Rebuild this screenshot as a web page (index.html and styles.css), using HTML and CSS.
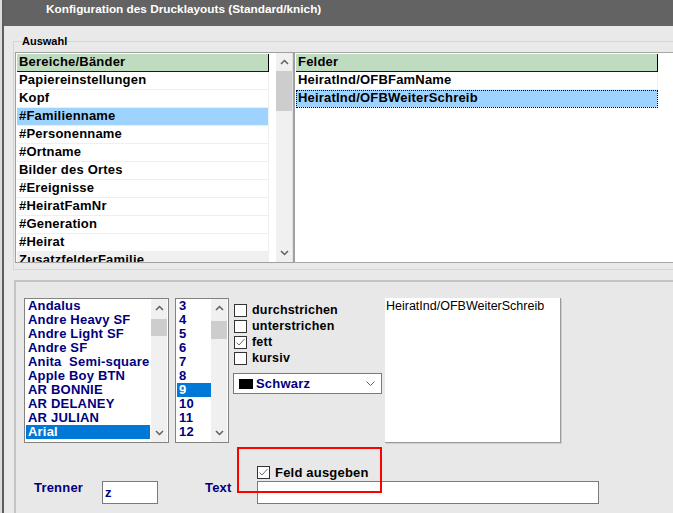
FILE: index.html
```html
<!DOCTYPE html>
<html lang="de">
<head>
<meta charset="utf-8">
<title>Konfiguration des Drucklayouts</title>
<link rel="stylesheet" href="styles.css">
</head>
<body>
<div class="window">
  <div class="titlebar">Konfiguration des Drucklayouts (Standard/knich)</div>
  <div class="client">
    <fieldset class="group">
      <legend>Auswahl</legend>
      <div class="lists">
        <div class="lb lb-bands">
          <div class="grid">
            <div class="hdr">Bereiche/Bänder</div>
            <div class="row">Papiereinstellungen</div>
            <div class="row">Kopf</div>
            <div class="row sel">#Familienname</div>
            <div class="row">#Personenname</div>
            <div class="row">#Ortname</div>
            <div class="row">Bilder des Ortes</div>
            <div class="row">#Ereignisse</div>
            <div class="row">#HeiratFamNr</div>
            <div class="row">#Generation</div>
            <div class="row">#Heirat</div>
            <div class="row dim">ZusatzfelderFamilie</div>
          </div>
          <div class="vscroll">
            <span class="arr"><svg width="9" height="6" viewBox="0 0 9 6"><polyline points="1,5 4.5,1.5 8,5" fill="none" stroke="#606060" stroke-width="1.5"/></svg></span>
            <span class="thumb t-bands"></span>
            <span class="arr down"><svg width="9" height="6" viewBox="0 0 9 6"><polyline points="1,1 4.5,4.5 8,1" fill="none" stroke="#606060" stroke-width="1.5"/></svg></span>
          </div>
        </div>
        <div class="lb lb-fields">
          <div class="grid">
            <div class="hdr">Felder</div>
            <div class="row">HeiratInd/OFBFamName</div>
            <div class="row sel focus">HeiratInd/OFBWeiterSchreib</div>
          </div>
        </div>
      </div>
    </fieldset>

    <div class="panel">
      <div class="format">
        <div class="lbx fonts">
          <ul class="items">
            <li>Andalus</li>
            <li>Andre Heavy SF</li>
            <li>Andre Light SF</li>
            <li>Andre SF</li>
            <li>Anita  Semi-square</li>
            <li>Apple Boy BTN</li>
            <li>AR BONNIE</li>
            <li>AR DELANEY</li>
            <li>AR JULIAN</li>
            <li class="sel">Arial</li>
          </ul>
          <div class="vscroll">
            <span class="arr"><svg width="9" height="6" viewBox="0 0 9 6"><polyline points="1,5 4.5,1.5 8,5" fill="none" stroke="#606060" stroke-width="1.5"/></svg></span>
            <span class="thumb t-fonts"></span>
            <span class="arr down"><svg width="9" height="6" viewBox="0 0 9 6"><polyline points="1,1 4.5,4.5 8,1" fill="none" stroke="#606060" stroke-width="1.5"/></svg></span>
          </div>
        </div>
        <div class="lbx sizes">
          <ul class="items">
            <li>3</li>
            <li>4</li>
            <li>5</li>
            <li>6</li>
            <li>7</li>
            <li>8</li>
            <li class="sel">9</li>
            <li>10</li>
            <li>11</li>
            <li>12</li>
          </ul>
          <div class="vscroll">
            <span class="arr"><svg width="9" height="6" viewBox="0 0 9 6"><polyline points="1,5 4.5,1.5 8,5" fill="none" stroke="#606060" stroke-width="1.5"/></svg></span>
            <span class="thumb t-sizes"></span>
            <span class="arr down"><svg width="9" height="6" viewBox="0 0 9 6"><polyline points="1,1 4.5,4.5 8,1" fill="none" stroke="#606060" stroke-width="1.5"/></svg></span>
          </div>
        </div>
        <div class="styles">
          <label class="chk"><span class="box"></span>durchstrichen</label>
          <label class="chk"><span class="box"></span>unterstrichen</label>
          <label class="chk"><span class="box"><svg width="11" height="11" viewBox="0 0 11 11"><polyline points="1.5,5.5 4,8 9.5,2" fill="none" stroke="#6d6d6d" stroke-width="1"/></svg></span>fett</label>
          <label class="chk"><span class="box"></span>kursiv</label>
          <div class="combo">
            <span class="swatch"></span>
            <span class="val">Schwarz</span>
            <svg class="chev" width="9" height="5" viewBox="0 0 9 5"><polyline points="0.5,0.5 4.5,4.5 8.5,0.5" fill="none" stroke="#606060" stroke-width="1"/></svg>
          </div>
        </div>
        <div class="preview">HeiratInd/OFBWeiterSchreib</div>
      </div>

      <div class="output">
        <label class="chk"><span class="box"><svg width="11" height="11" viewBox="0 0 11 11"><polyline points="1.5,5.5 4,8 9.5,2" fill="none" stroke="#6d6d6d" stroke-width="1"/></svg></span>Feld ausgeben</label>
      </div>

      <div class="fieldrow">
        <span class="flabel trenner">Trenner</span>
        <div class="input short">z</div>
        <span class="flabel text">Text</span>
        <div class="input long"></div>
      </div>

      <div class="highlight"></div>
    </div>
  </div>
</div>
</body>
</html>
```
FILE: styles.css
```css
html, body {
  margin: 0;
  padding: 0;
}
body {
  background: #dcdcdc;
  font-family: "Liberation Sans", Arial, sans-serif;
  font-size: 12px;
  height: 513px;
  overflow: hidden;
  color: #000;
}
.window {
  margin-left: 2px;
  border-left: 2px solid #5e5e5e;
  height: 513px;
  display: flex;
  flex-direction: column;
  overflow: hidden;
}
.titlebar {
  height: 26px;
  box-sizing: border-box;
  background: #636363;
  color: #fff;
  font-weight: bold;
  font-size: 11.8px;
  line-height: 14px;
  padding: 2px 0 0 42px;
  white-space: nowrap;
  flex: none;
}
.client {
  flex: 1;
  background: #e9e9e9;
  padding-top: 8px;
  display: flex;
  flex-direction: column;
  min-height: 0;
}

/* Auswahl group */
.group {
  margin: 0 0 0 9px;
  padding: 4px 0 6px 1px;
  border: 1px solid #d5d5d5;
  border-right: 0;
  min-width: 0;
  flex: none;
}
.group legend {
  margin-left: 7px;
  padding: 0;
  font-weight: bold;
  font-size: 11px;
  line-height: 14px;
}
.lists {
  display: flex;
  height: 211px;
}
.lb {
  box-sizing: border-box;
  height: 211px;
  background: #fff;
  display: flex;
}
.lb-bands {
  width: 278px;
  flex: none;
  border: 1px solid #a0a0a0;
  border-right: 0;
}
.lb-fields {
  flex: 1;
  border-top: 1px solid #a9a9a9;
  border-bottom: 1px solid #a9a9a9;
  border-left: 2px solid #a0a0a0;
  padding-left: 1px;
}
.grid {
  margin-top: 1px;
  overflow: hidden;
  font-weight: bold;
  font-size: 13px;
  letter-spacing: 0.2px;
  white-space: nowrap;
}
.lb-bands .grid {
  width: 252px;
  height: 208px;
  margin-left: 1px;
}
.lb-fields .grid {
  width: 362px;
}
.hdr {
  height: 17px;
  line-height: 16px;
  background: #c0dcc0;
  border-bottom: 1px solid #1a1a1a;
  border-right: 1px solid #000;
  padding-left: 2px;
}
.row {
  height: 17px;
  line-height: 16px;
  border-bottom: 1px solid #efefef;
  border-right: 1px solid #efefef;
  padding-left: 2px;
}
.row.sel {
  background: #9fd3ff;
}
.row.focus {
  outline: 1px dotted #000;
  outline-offset: -1px;
}
.row.dim {
  background: #f0f0f0;
}

/* scrollbars */
.vscroll {
  width: 16px;
  flex: none;
  background: #f0f0f0;
  display: flex;
  flex-direction: column;
}
.lb-bands .vscroll {
  margin-left: 7px;
  border-right: 1px solid #e2e2e2;
}
.fonts .vscroll {
  margin-left: 1px;
}
.arr {
  height: 18px;
  width: 16px;
  flex: none;
  display: flex;
  align-items: center;
  justify-content: center;
}
.arr.down {
  margin-top: auto;
}
.thumb {
  width: 16px;
  flex: none;
  background: #cdcdcd;
}
.t-bands {
  height: 40px;
}
.t-fonts {
  margin-top: 2px;
  height: 17px;
}
.t-sizes {
  margin-top: 4px;
  height: 18px;
}

/* bottom panel */
.panel {
  position: relative;
  flex: 1;
  margin: 10px 0 0 10px;
  border-top: 2px solid #c4c4c4;
  border-left: 2px solid #c4c4c4;
  background: #e8e8e8;
}
.format {
  display: flex;
  align-items: flex-start;
  padding: 16px 0 0 8px;
}
.lbx {
  box-sizing: border-box;
  height: 145px;
  border: 1px solid #828282;
  background: #fff;
  display: flex;
  padding-left: 1px;
  flex: none;
}
.fonts {
  width: 145px;
}
.sizes {
  width: 54px;
  margin-left: 6px;
}
.items {
  margin: 0;
  padding: 0;
  list-style: none;
  color: #000080;
  font-weight: bold;
  font-size: 13px;
  letter-spacing: 0.2px;
  flex: none;
  overflow: hidden;
}
.fonts .items {
  width: 124px;
}
.sizes .items {
  width: 34px;
}
.items li {
  height: 14px;
  line-height: 14px;
  padding-left: 2px;
  white-space: pre;
}
.items li.sel {
  background: #0078d7;
  color: #fff;
}
.styles {
  margin-left: 4px;
  padding-top: 4px;
  display: flex;
  flex-direction: column;
  flex: none;
}
.chk {
  display: flex;
  align-items: center;
  height: 16px;
  font-weight: bold;
  font-size: 12.5px;
  letter-spacing: 0.2px;
  color: #000;
  white-space: nowrap;
}
.styles .chk {
  margin-left: 1px;
}
.output .chk {
  font-size: 13px;
}
.box {
  width: 13px;
  height: 13px;
  box-sizing: border-box;
  border: 1px solid #333;
  background: #fff;
  margin-right: 5px;
  display: flex;
  align-items: center;
  justify-content: center;
  flex: none;
}
.combo {
  margin-top: 7px;
  width: 149px;
  height: 21px;
  box-sizing: border-box;
  border: 1px solid #7a7a7a;
  background: #fff;
  display: flex;
  align-items: center;
  padding-left: 5px;
  color: #000080;
  font-weight: bold;
  font-size: 13px;
  letter-spacing: 0.2px;
}
.swatch {
  width: 14px;
  height: 10px;
  background: #000;
  margin-right: 3px;
  flex: none;
}
.chev {
  margin-left: auto;
  margin-right: 6px;
}
.preview {
  margin-left: 3px;
  width: 176px;
  height: 145px;
  box-sizing: border-box;
  background: #fff;
  border-right: 1px solid #9a9a9a;
  border-bottom: 1px solid #9a9a9a;
  box-shadow: 1px 1px 0 #cfcfcf;
  padding: 1px 0 0 1px;
  font-size: 12.5px;
  line-height: 15px;
  white-space: nowrap;
  flex: none;
}
.output {
  margin-top: 21px;
  padding-left: 241px;
}
.fieldrow {
  display: flex;
  align-items: flex-start;
  margin-top: 1px;
  padding-left: 18px;
}
.flabel {
  color: #000080;
  font-weight: bold;
  font-size: 13px;
  letter-spacing: 0.2px;
  line-height: 14px;
  flex: none;
}
.flabel.trenner {
  width: 68px;
}
.flabel.text {
  margin-left: 47px;
  width: 52px;
}
.input {
  box-sizing: border-box;
  height: 23px;
  border: 1px solid #7a7a7a;
  background: #fff;
  color: #000080;
  font-weight: bold;
  font-size: 13px;
  padding-left: 2px;
  line-height: 21px;
  flex: none;
}
.input.short {
  width: 56px;
}
.input.long {
  width: 342px;
}
.highlight {
  position: absolute;
  left: 221px;
  top: 165px;
  width: 145px;
  height: 46px;
  box-sizing: border-box;
  border: 2px solid #ff0000;
}
```
